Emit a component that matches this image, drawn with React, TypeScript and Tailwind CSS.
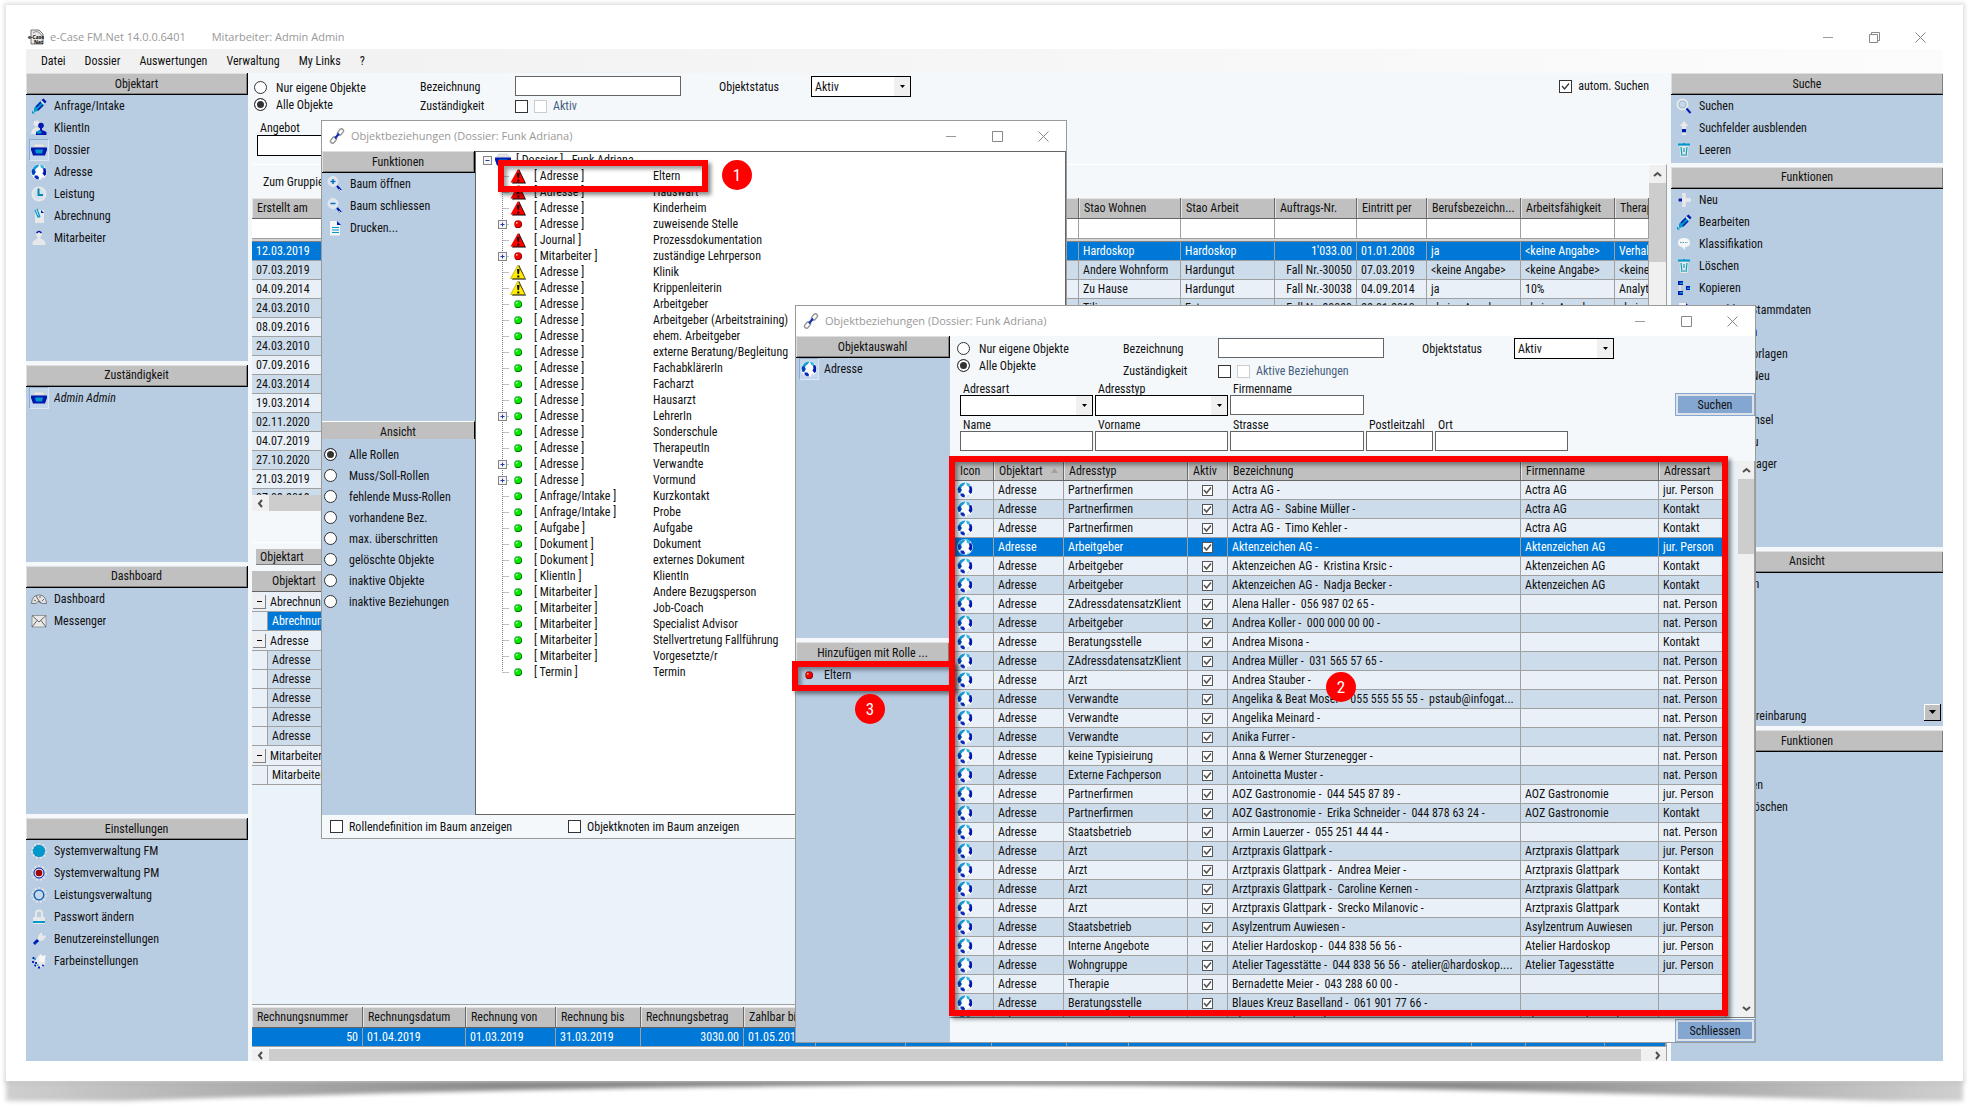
import React, { useState } from 'react';
import clsx from 'clsx';

/* ---------- icons ---------- */

const NAVY = '#0018b0';
const CYAN = '#0099cc';
const PALE = '#e6e8ea';

function Svg({ children, size = 16 }: { children: React.ReactNode; size?: number }) {
  return (
    <svg width={size} height={size} viewBox="0 0 16 16" fill="none" className="shrink-0" aria-hidden="true">
      {children}
    </svg>
  );
}

const icons: Record<string, React.ReactNode> = {
  pencil: (
    <>
      <path d="M3 10 L10 2.500 L14 6 L7 13 L3 14z" fill={CYAN} />
      <path d="M5 9 L10 4 M7 12 L12 7" stroke={NAVY} strokeWidth="1.500" />
      <path d="M10.500 2 L12.500 .5 L15.500 3.500 L14 5.500z" fill={NAVY} />
      <path d="M10 3 L13.500 6.500" stroke={PALE} strokeWidth="1.500" />
      <path d="M1 15.500 V12.500 L4 15.500z" fill={CYAN} />
    </>
  ),
  client: (
    <>
      <circle cx="5.500" cy="3.500" r="3" fill={PALE} />
      <path d="M0 14 Q0 9 5 7 L9 9 L7 14z" fill={PALE} />
      <circle cx="10" cy="5.500" r="2.800" fill={NAVY} />
      <path d="M9 7 H11 V10 L15.500 12 V15 H5 V12 L9 10z" fill={NAVY} />
      <path d="M5 12 L9 10 L11 13 L7 14z" fill={CYAN} />
    </>
  ),
  dossier: (
    <>
      <path d="M1.500 5 L4 2 H12 L14.500 5z" fill={PALE} stroke="#bbb" strokeWidth=".5" />
      <path d="M0 5.500 H16 V8 L14 13.500 H2 L0 8z" fill={NAVY} />
      <path d="M4 7.500 H12 L11 11.500 H5z" fill={CYAN} />
    </>
  ),
  globe: (
    <>
      <circle cx="8" cy="8" r="7.800" fill="#fbfbfb" />
      <path d="M3 2.500 Q5.500 .3 8.500 .6 L7 3 L5 4.500 L4 6.500 L5 8 L3.500 10.500 L1.500 11 Q0 8 1 5.500z" fill="#1b9bd8" />
      <path d="M.8 6 L3 5 L4.500 8 L3 11 L1.500 10.500 Q.4 8 .8 6z" fill="#0a3fb8" />
      <path d="M9 .6 Q12 1 13.500 3 L12 5 L10 3.500z" fill="#35b6e6" />
      <path d="M12 4.500 L14.300 4 Q16 7.500 15 10.500 L13.500 12 L11.500 9.500 L12.500 7.500z" fill={NAVY} />
      <path d="M3.500 11.500 L6.500 11.500 L8 13.500 L7.500 15.600 Q5 15.300 3.500 13.500z" fill="#0a2cc0" />
      <path d="M10 14 L13 12.500 L12 14.500 L10 15.500z" fill="#c4d4e6" />
    </>
  ),
  clock: (
    <>
      <circle cx="8" cy="8" r="7.500" fill={PALE} />
      <circle cx="8" cy="8" r="5.500" fill="#d4e2f0" />
      <path d="M7.500 2.500 V9 H12" stroke="#0a86a8" strokeWidth="2" />
    </>
  ),
  invoice: (
    <>
      <path d="M4 2 H13 V15 H4z" fill={PALE} />
      <path d="M6 1 L9 9 M4 2 L7 9 Q9 10 8 6" stroke={CYAN} strokeWidth="1.200" />
      <path d="M10 2 L13 5 H10z" fill={NAVY} />
    </>
  ),
  staff: (
    <>
      <circle cx="8" cy="4" r="3" fill={PALE} />
      <path d="M5.500 3 Q8 0 10.500 3" stroke={NAVY} strokeWidth="1.500" />
      <path d="M1.500 15 V12 Q4 9 6.500 8.500 V6 H9.500 V8.500 Q12 9 14.500 12 V15z" fill={PALE} />
    </>
  ),
  dashboard: (
    <>
      <path d="M.5 12.500 Q1 4 8 4 Q15 4 15.500 12.500 H11 Q8 8 5 12.500z" fill="#e4e4e4" stroke="#666" strokeWidth=".8" />
      <path d="M5 5 L9.500 12.500 M3 9 L5 10 M13 8 L11 10 M9 5 V7" stroke="#555" strokeWidth=".9" />
    </>
  ),
  mail: (
    <>
      <path d="M1 2.500 H15 V14 H1z" fill="#e8e8e8" stroke="#888" strokeWidth=".8" />
      <path d="M1 2.500 L8 9 L15 2.500 M1 14 L6 7.500 M15 14 L10 7.500" stroke="#555" strokeWidth=".9" />
    </>
  ),
  discCyan: (
    <>
      <circle cx="8" cy="8" r="7" fill="none" stroke={PALE} strokeWidth="1.500" strokeDasharray="2 2" />
      <circle cx="8" cy="8" r="6" fill={CYAN} />
      <circle cx="8" cy="8" r="5.800" stroke="#0a6fb8" strokeDasharray="1 2" />
    </>
  ),
  discRed: (
    <>
      <circle cx="8" cy="8" r="7" stroke={PALE} strokeWidth="1.500" strokeDasharray="2 2" />
      <circle cx="8" cy="8" r="5" fill="#e6e8ea" stroke={NAVY} />
      <circle cx="8" cy="8" r="3.300" fill="#a00000" />
    </>
  ),
  discRing: (
    <>
      <circle cx="8" cy="8" r="7" stroke={PALE} strokeWidth="1.500" strokeDasharray="2 2" />
      <circle cx="8" cy="8" r="4.800" fill="#c8d8ea" stroke="#0a5fb8" strokeWidth="1.300" />
    </>
  ),
  lock: (
    <>
      <path d="M5 8 V4 Q5 1.500 8 1.500 Q11 1.500 11 4 V8" stroke={PALE} strokeWidth="2" />
      <path d="M2 8 H14 V15 H2z" fill={PALE} />
      <path d="M2 12 H14 V14 H2z" fill={CYAN} />
    </>
  ),
  wrench: (
    <>
      <path d="M7 9 Q6 4 11 1 L11 4 L13 5 L15 4 Q15 8 10 10z" fill={PALE} />
      <path d="M3 13 L7 9" stroke={NAVY} strokeWidth="3" />
      <path d="M4.500 13 L6 11.500" stroke={CYAN} strokeWidth="1" />
    </>
  ),
  palette: (
    <>
      <path d="M8 2 Q14 2 14.500 8 Q14 14.500 8 14.500 Q4 14 4 8z" fill={PALE} />
      <path d="M2.500 4 V6 M2 8 V10 M3.500 12 L5 13 M7 14.500 H9 M11.500 13 L12.500 12 M5 9 V11" stroke={NAVY} strokeWidth="1.800" />
      <path d="M4 5 V7 M6 12 H7.500" stroke={CYAN} strokeWidth="1.500" />
      <path d="M8 8 L9 1 L12 3 L15 2 L13 9z" fill="#f4f6f8" />
    </>
  ),
  search: (
    <>
      <circle cx="6.500" cy="6.500" r="5" fill="#c6d8ea" stroke={PALE} strokeWidth="2" />
      <circle cx="6.500" cy="6.500" r="3.500" stroke="#8fb6c8" strokeWidth=".8" />
      <path d="M10.500 10.500 L14.500 15" stroke={NAVY} strokeWidth="2" />
    </>
  ),
  zoomIn: (
    <>
      <circle cx="6" cy="5.500" r="5" fill="#dde6ef" stroke={PALE} />
      <path d="M6 3 V8 M3.500 5.500 H8.500" stroke="#0a6fb8" strokeWidth="1.500" />
      <path d="M10 10 L14 14.500" stroke={NAVY} strokeWidth="2" />
      <path d="M12 13 L15 16" stroke={PALE} />
    </>
  ),
  zoomOut: (
    <>
      <circle cx="6" cy="5.500" r="5" fill="#dde6ef" stroke={PALE} />
      <path d="M3.500 5.500 H8.500" stroke="#0a6fb8" strokeWidth="1.500" />
      <path d="M10 10 L14 14.500" stroke={NAVY} strokeWidth="2" />
      <path d="M12 13 L15 16" stroke={PALE} />
    </>
  ),
  page: (
    <>
      <path d="M3 1 H10 L13 4 V15.500 H3z" fill="#f2f4f6" />
      <path d="M10 1 L14 5 H10z" fill={NAVY} />
      <path d="M5 7.500 H12 M5 10 H12 M5 12.500 H12" stroke={CYAN} />
    </>
  ),
  arrowUp: (
    <>
      <path d="M8 1 L12.500 6 H10 V9 H6 V6 H3.500z" fill={PALE} />
      <path d="M6 9 H10 V12.500 H6z" fill={NAVY} />
      <path d="M6 12.500 H10 V15 H6z" fill={PALE} />
    </>
  ),
  trash: (
    <>
      <path d="M3.500 4 H12.500 L11.500 15 H4.500z" fill={PALE} />
      <path d="M2 2.500 H14 M8 1 V2.500" stroke={CYAN} strokeWidth="1.800" />
      <path d="M5 5 L6 14 M8 6 V10 M8 12 V14 M11 5 L10 14" stroke="#0aa0b8" strokeWidth="1.200" />
    </>
  ),
  plus: (
    <>
      <path d="M8 1 V15 M2 8 H15" stroke={PALE} strokeWidth="3.500" />
      <path d="M2.500 6.500 H6 V9.500 H2.500z" fill={NAVY} />
    </>
  ),
  bubble: (
    <>
      <path d="M2 7 Q2 2 8 2 Q14 2 14 7 Q14 11 9 11 L9 14 L6 11 Q2 10 2 7z" fill="#f4f6f8" />
      <path d="M4 6.500 H12" stroke="#5f9cc0" strokeWidth="1.200" strokeDasharray="1.500 1" />
    </>
  ),
  copy: (
    <>
      <path d="M2 1 H7 V5 H2z M10 6 H14 V10 H10z M2 11 H7 V15 H2z" fill={NAVY} />
      <path d="M3.500 2.500 H7 V4 H3.500z M11 7.500 H14 V9 H11z M3.500 12 H7 V13.500 H3.500z" fill={CYAN} />
      <path d="M4 5 V11" stroke={PALE} strokeWidth="1.500" />
    </>
  ),
  chain: (
    <>
      <rect x="-3.500" y="-2" width="7" height="4" rx="2" transform="translate(11.500 4) rotate(-50)" stroke="#9a9a9a" strokeWidth="1.500" />
      <rect x="-3.500" y="-2" width="7" height="4" rx="2" transform="translate(4.500 12) rotate(-50)" stroke="#9a9a9a" strokeWidth="1.500" />
      <path d="M6 10.500 L10 5.500" stroke="#1a2fb8" strokeWidth="2.200" />
    </>
  ),
  warnRed: (
    <>
      <path d="M9 1 L16 15.500 H2z" fill="#000" />
      <path d="M8 1 L15 14.500 H.5z" fill="#f00" />
      <path d="M7 5 H9.500 L9 10 H7.500z M7.300 11.500 H9.300 V13.500 H7.300z" fill="#000" />
    </>
  ),
  warnYellow: (
    <>
      <path d="M9 1 L16 15.500 H2z" fill="#000" />
      <path d="M8 1 L15 14.500 H.5z" fill="#ffec00" stroke="#8a8000" strokeWidth=".5" />
      <path d="M7 5 H9.500 L9 10 H7.500z M7.300 11.500 H9.300 V13.500 H7.300z" fill="#000" />
    </>
  ),
  ballRed: (
    <>
      <path d="M6 4.500 H10 L12 6.500 V10 L10 12 H6 L4.500 10 V6.500z" fill="#8a0000" />
      <circle cx="8" cy="8" r="3.300" fill="#f00000" />
      <circle cx="6.800" cy="6.800" r=".9" fill="#ffd0a0" />
    </>
  ),
  ballGreen: (
    <>
      <path d="M6 4.500 H10 L12 6.500 V10 L10 12 H6 L4.500 10 V6.500z" fill="#006a00" />
      <circle cx="8" cy="8" r="3.300" fill="#00e800" />
      <circle cx="6.800" cy="6.800" r=".9" fill="#d8ffd8" />
    </>
  ),
};

function Icon({ name, size }: { name: string; size?: number }) {
  return <Svg size={size}>{icons[name]}</Svg>;
}

/* ---------- small controls ---------- */

function Checkbox({ checked, dim, grid, label, ...rest }: { checked?: boolean; dim?: boolean; grid?: boolean; label?: string; id?: string }) {
  const [on, setOn] = useState(!!checked);
  return (
    <span className="inline-grid shrink-0 place-items-center">
      <input
        type="checkbox"
        checked={on}
        disabled={dim}
        aria-label={label}
        onChange={() => setOn(!on)}
        className={clsx(
          'col-start-1 row-start-1 appearance-none border bg-white',
          grid ? 'h-[11px] w-[11px]' : 'h-[13px] w-[13px]',
          dim ? 'border-[#cccccc]' : grid ? 'border-[#555555]' : 'border-[#333333]'
        )}
        {...rest}
      />
      {on && (
        <svg width="11" height="11" viewBox="0 0 11 11" className="pointer-events-none col-start-1 row-start-1">
          <path d="M2 5 L4.500 8 L9 2.500" fill="none" stroke={grid ? '#555' : '#333'} strokeWidth={grid ? 1.6 : 1.2} />
        </svg>
      )}
    </span>
  );
}

function Radio({ name, label, checked }: { name: string; label: string; checked?: boolean }) {
  return (
    <label className="flex items-center gap-[9px]">
      <input
        type="radio"
        name={name}
        defaultChecked={checked}
        className="h-[13px] w-[13px] shrink-0 appearance-none rounded-full border border-[#333333] bg-white checked:bg-[#333333] checked:shadow-[inset_0_0_0_2px_#ffffff]"
      />
      {label}
    </label>
  );
}

function Select({ id, value = '', className }: { id: string; value?: string; className?: string }) {
  return (
    <span className={clsx('grid h-[21px] border border-black bg-white', className)}>
      <select id={id} defaultValue={value} className="col-start-1 row-start-1 w-full appearance-none bg-transparent pl-[3px] outline-none">
        <option value={value}>{value}</option>
      </select>
      <span className="pointer-events-none col-start-1 row-start-1 flex w-4 items-center justify-center justify-self-end bg-[#f0f0f0]">
        <svg width="5" height="3" viewBox="0 0 5 3">
          <path d="M0 0 H5 L2.500 3z" />
        </svg>
      </span>
    </span>
  );
}

function TextField({ id, className }: { id: string; className?: string }) {
  return <input id={id} type="text" className={clsx('h-5 border border-[#646464] bg-white px-1 outline-none', className)} />;
}

function WindowButtons({ restore }: { restore?: boolean }) {
  return (
    <div className="flex">
      <button aria-label="Minimieren" className="flex h-6 w-[46px] items-center justify-center">
        <svg width="11" height="11" viewBox="0 0 11 11" stroke="#999" fill="none"><path d="M0 5.500 H10" /></svg>
      </button>
      <button aria-label="Maximieren" className="flex h-6 w-[46px] items-center justify-center">
        <svg width="11" height="11" viewBox="0 0 11 11" stroke="#888" fill="none">
          {restore ? <path d="M.5 2.500 H8.500 V10.500 H.5z M2.500 2.500 V.5 H10.500 V8.500 H8.500" /> : <path d="M.5 .5 H10.500 V10.500 H.5z" />}
        </svg>
      </button>
      <button aria-label="Schliessen" className="flex h-6 w-[46px] items-center justify-center">
        <svg width="11" height="11" viewBox="0 0 11 11" stroke="#888" fill="none"><path d="M.5 .5 L10.500 10.500 M10.500 .5 L.5 10.500" /></svg>
      </button>
    </div>
  );
}

function PanelHeader({ title, open }: { title: string; open?: boolean }) {
  return (
    <h2
      className={clsx(
        'flex h-[22px] shrink-0 items-center justify-center border-b border-black bg-[#c0c0c0] shadow-[inset_1px_1px_#dfdfdf,inset_-1px_-1px_#808080]',
        !open && 'border-r'
      )}
    >
      {title}
    </h2>
  );
}

interface Item {
  icon: string;
  label: string;
  active?: boolean;
  italic?: boolean;
}

function PanelItem({ icon, label, active, italic }: Item) {
  return (
    <button className="flex h-[22px] w-full items-center gap-[5px] pl-[3px] text-left">
      <span
        className={clsx(
          'flex h-[22px] w-5 shrink-0 items-center justify-center border',
          active ? 'border-t-[#8fabcf] border-r-[#dbe7f5] border-b-[#dbe7f5] border-l-[#8fabcf] bg-[#c4d6ea]' : 'border-transparent'
        )}
      >
        <Icon name={icon} />
      </span>
      <span className={clsx('truncate', italic && 'italic')}>{label}</span>
    </button>
  );
}

function Panel({ title, items, open, className, children }: { title: string; items?: Item[]; open?: boolean; className: string; children?: React.ReactNode }) {
  return (
    <section className={clsx('flex min-h-0 basis-0 flex-col overflow-hidden bg-[#b8cce2]', className)}>
      <PanelHeader title={title} open={open} />
      <div>
        {items?.map((item) => (
          <PanelItem key={item.label} {...item} />
        ))}
      </div>
      {children}
    </section>
  );
}

/* Filter fields shared by the main window and the selection dialog */
function SearchHead({ id, activeLabel, rows, radios, children }: { id: string; activeLabel: string; rows: string; radios: string; children?: React.ReactNode }) {
  return (
    <div className="flex items-start">
      <div className={clsx('flex w-[166px] shrink-0 flex-col *:h-[17px]', radios)}>
        <Radio name={`${id}-scope`} label="Nur eigene Objekte" />
        <Radio name={`${id}-scope`} label="Alle Objekte" checked />
      </div>
      <div className={clsx('grid shrink-0 grid-cols-[95px_204px_92px_100px]', rows)}>
        <label htmlFor={`${id}-bez`} className="self-center">Bezeichnung</label>
        <TextField id={`${id}-bez`} className="w-[166px]" />
        <label htmlFor={`${id}-status`} className="self-center">Objektstatus</label>
        <Select id={`${id}-status`} value="Aktiv" />
        <label htmlFor={`${id}-zust`} className="self-center">Zuständigkeit</label>
        <span className="flex items-center gap-[6px] text-[#44607f]">
          <Checkbox id={`${id}-zust`} />
          <Checkbox id={`${id}-aktiv`} dim />
          <label htmlFor={`${id}-aktiv`}>{activeLabel}</label>
        </span>
      </div>
      {children}
    </div>
  );
}

const th = 'h-5 overflow-hidden whitespace-nowrap border-r border-b border-r-[#696969] border-b-[#646464] bg-[#c0c0c0] px-[5px] text-left font-normal shadow-[inset_1px_1px_#e4e4e4]';
const td = 'h-[19px] overflow-hidden whitespace-pre border-r border-b border-[#a0a0a0] px-1 py-0 leading-[18px]';

function rowColor(i: number, selected: number) {
  if (i === selected) return 'bg-[#0078d7] text-white';
  return i % 2 ? 'bg-[#cddceb]' : 'bg-[#e9f0f8]';
}

/* ---------- data ---------- */

const objectTypes: Item[] = [
  { icon: 'pencil', label: 'Anfrage/Intake' },
  { icon: 'client', label: 'KlientIn' },
  { icon: 'dossier', label: 'Dossier', active: true },
  { icon: 'globe', label: 'Adresse' },
  { icon: 'clock', label: 'Leistung' },
  { icon: 'invoice', label: 'Abrechnung' },
  { icon: 'staff', label: 'Mitarbeiter' },
];

const settings: Item[] = [
  { icon: 'discCyan', label: 'Systemverwaltung FM' },
  { icon: 'discRed', label: 'Systemverwaltung PM' },
  { icon: 'discRing', label: 'Leistungsverwaltung' },
  { icon: 'lock', label: 'Passwort ändern' },
  { icon: 'wrench', label: 'Benutzereinstellungen' },
  { icon: 'palette', label: 'Farbeinstellungen' },
];

const searchActions: Item[] = [
  { icon: 'search', label: 'Suchen' },
  { icon: 'arrowUp', label: 'Suchfelder ausblenden' },
  { icon: 'trash', label: 'Leeren' },
];

const functions: Item[] = [
  { icon: 'plus', label: 'Neu' },
  { icon: 'pencil', label: 'Bearbeiten' },
  { icon: 'bubble', label: 'Klassifikation' },
  { icon: 'trash', label: 'Löschen' },
  { icon: 'copy', label: 'Kopieren' },
  { icon: 'page', label: 'Datenblatt Stammdaten' },
  { icon: 'page', label: 'Serie planen' },
  { icon: 'page', label: 'Dokumentvorlagen' },
  { icon: 'plus', label: 'Beziehung Neu' },
  { icon: 'chain', label: 'Rollen' },
  { icon: 'copy', label: 'Dossierwechsel' },
  { icon: 'plus', label: 'Aufgabe neu' },
  { icon: 'page', label: 'Kontaktmanager' },
];

const views: Item[] = [
  { icon: 'page', label: 'Rollen sehen' },
  { icon: 'page', label: 'Verlauf' },
  { icon: 'page', label: 'Journal' },
  { icon: 'page', label: 'Termine' },
  { icon: 'page', label: 'Notizen' },
  { icon: 'page', label: 'Aufgaben' },
  { icon: 'page', label: 'Leistungsvereinbarung' },
];

const viewActions: Item[] = [
  { icon: 'plus', label: 'Neu' },
  { icon: 'page', label: 'Objekt öffnen' },
  { icon: 'trash', label: 'Beziehung löschen' },
];

const dossierRows = [
  ['12.03.2019', '', 'Hardoskop', 'Hardoskop', "1'033.00", '01.01.2008', 'ja', '<keine Angabe>', 'Verhaltenstherapie'],
  ['07.03.2019', '', 'Andere Wohnform', 'Hardungut', 'Fall Nr.-30050', '07.03.2019', '<keine Angabe>', '<keine Angabe>', '<keine Angabe>'],
  ['04.09.2014', '', 'Zu Hause', 'Hardungut', 'Fall Nr.-30038', '04.09.2014', 'ja', '10%', 'Analytisch'],
  ['24.03.2010', '', 'Tilia', 'Extern', 'Fall Nr.-30083', '22.01.2010', '<keine Angabe>', '<keine Angabe>', '<keine Angabe>'],
  ...['08.09.2016', '24.03.2010', '07.09.2016', '24.03.2014', '19.03.2014', '02.11.2020', '04.07.2019', '27.10.2020', '21.03.2019', '07.03.2019'].map((d) => [
    d, '', '', '', '', '', '', '', '',
  ]),
];

const relationGroups = [
  { name: 'Abrechnung', count: 1, selected: true },
  { name: 'Adresse', count: 5 },
  { name: 'Mitarbeiter', count: 1 },
];

const treeRows: [string, string, string, boolean?][] = [
  ['warnRed', 'Adresse', 'Eltern'],
  ['warnRed', 'Adresse', 'Hauswart'],
  ['warnRed', 'Adresse', 'Kinderheim'],
  ['ballRed', 'Adresse', 'zuweisende Stelle', true],
  ['warnRed', 'Journal', 'Prozessdokumentation'],
  ['ballRed', 'Mitarbeiter', 'zuständige Lehrperson', true],
  ['warnYellow', 'Adresse', 'Klinik'],
  ['warnYellow', 'Adresse', 'Krippenleiterin'],
  ['ballGreen', 'Adresse', 'Arbeitgeber'],
  ['ballGreen', 'Adresse', 'Arbeitgeber (Arbeitstraining)'],
  ['ballGreen', 'Adresse', 'ehem. Arbeitgeber'],
  ['ballGreen', 'Adresse', 'externe Beratung/Begleitung'],
  ['ballGreen', 'Adresse', 'FachabklärerIn'],
  ['ballGreen', 'Adresse', 'Facharzt'],
  ['ballGreen', 'Adresse', 'Hausarzt'],
  ['ballGreen', 'Adresse', 'LehrerIn', true],
  ['ballGreen', 'Adresse', 'Sonderschule'],
  ['ballGreen', 'Adresse', 'TherapeutIn'],
  ['ballGreen', 'Adresse', 'Verwandte', true],
  ['ballGreen', 'Adresse', 'Vormund', true],
  ['ballGreen', 'Anfrage/Intake', 'Kurzkontakt'],
  ['ballGreen', 'Anfrage/Intake', 'Probe'],
  ['ballGreen', 'Aufgabe', 'Aufgabe'],
  ['ballGreen', 'Dokument', 'Dokument'],
  ['ballGreen', 'Dokument', 'externes Dokument'],
  ['ballGreen', 'KlientIn', 'KlientIn'],
  ['ballGreen', 'Mitarbeiter', 'Andere Bezugsperson'],
  ['ballGreen', 'Mitarbeiter', 'Job-Coach'],
  ['ballGreen', 'Mitarbeiter', 'Specialist Advisor'],
  ['ballGreen', 'Mitarbeiter', 'Stellvertretung Fallführung'],
  ['ballGreen', 'Mitarbeiter', 'Vorgesetzte/r'],
  ['ballGreen', 'Termin', 'Termin'],
];

const roleFilters = ['Alle Rollen', 'Muss/Soll-Rollen', 'fehlende Muss-Rollen', 'vorhandene Bez.', 'max. überschritten', 'gelöschte Objekte', 'inaktive Objekte', 'inaktive Beziehungen'];

const addresses: [string, string, string, string][] = [
  ['Partnerfirmen', 'Actra AG -', 'Actra AG', 'jur. Person'],
  ['Partnerfirmen', 'Actra AG -  Sabine Müller -', 'Actra AG', 'Kontakt'],
  ['Partnerfirmen', 'Actra AG -  Timo Kehler -', 'Actra AG', 'Kontakt'],
  ['Arbeitgeber', 'Aktenzeichen AG -', 'Aktenzeichen AG', 'jur. Person'],
  ['Arbeitgeber', 'Aktenzeichen AG -  Kristina Krsic -', 'Aktenzeichen AG', 'Kontakt'],
  ['Arbeitgeber', 'Aktenzeichen AG -  Nadja Becker -', 'Aktenzeichen AG', 'Kontakt'],
  ['ZAdressdatensatzKlient', 'Alena Haller -  056 987 02 65 -', '', 'nat. Person'],
  ['Arbeitgeber', 'Andrea Koller -  000 000 00 00 -', '', 'nat. Person'],
  ['Beratungsstelle', 'Andrea Misona -', '', 'Kontakt'],
  ['ZAdressdatensatzKlient', 'Andrea Müller -  031 565 57 65 -', '', 'nat. Person'],
  ['Arzt', 'Andrea Stauber -', '', 'nat. Person'],
  ['Verwandte', 'Angelika & Beat Moser -  055 555 55 55 -  pstaub@infogat...', '', 'nat. Person'],
  ['Verwandte', 'Angelika Meinard -', '', 'nat. Person'],
  ['Verwandte', 'Anika Furrer -', '', 'nat. Person'],
  ['keine Typisieirung', 'Anna & Werner Sturzenegger -', '', 'nat. Person'],
  ['Externe Fachperson', 'Antoinetta Muster -', '', 'nat. Person'],
  ['Partnerfirmen', 'AOZ Gastronomie -  044 545 87 89 -', 'AOZ Gastronomie', 'jur. Person'],
  ['Partnerfirmen', 'AOZ Gastronomie -  Erika Schneider -  044 878 63 24 -', 'AOZ Gastronomie', 'Kontakt'],
  ['Staatsbetrieb', 'Armin Lauerzer -  055 251 44 44 -', '', 'nat. Person'],
  ['Arzt', 'Arztpraxis Glattpark -', 'Arztpraxis Glattpark', 'jur. Person'],
  ['Arzt', 'Arztpraxis Glattpark -  Andrea Meier -', 'Arztpraxis Glattpark', 'Kontakt'],
  ['Arzt', 'Arztpraxis Glattpark -  Caroline Kernen -', 'Arztpraxis Glattpark', 'Kontakt'],
  ['Arzt', 'Arztpraxis Glattpark -  Srecko Milanovic -', 'Arztpraxis Glattpark', 'Kontakt'],
  ['Staatsbetrieb', 'Asylzentrum Auwiesen -', 'Asylzentrum Auwiesen', 'jur. Person'],
  ['Interne Angebote', 'Atelier Hardoskop -  044 838 56 56 -', 'Atelier Hardoskop', 'jur. Person'],
  ['Wohngruppe', 'Atelier Tagesstätte -  044 838 56 56 -  atelier@hardoskop....', 'Atelier Tagesstätte', 'jur. Person'],
  ['Therapie', 'Bernadette Meier -  043 288 60 00 -', '', ''],
  ['Beratungsstelle', 'Blaues Kreuz Baselland -  061 901 77 66 -', '', ''],
  ['Interne Angebote', 'Blumengut Glattpark -  061 222 78 90 -', 'Blumengut Glattpark', 'jur. Person'],
];

/* ---------- main window ---------- */

function Chevron({ d }: { d: string }) {
  return (
    <svg width="9" height="9" viewBox="0 0 9 9" fill="none" stroke="#505050" strokeWidth="2" aria-hidden="true">
      <path d={d} />
    </svg>
  );
}

function DossierTable() {
  return (
    <div className="flex h-[347px] shrink-0 border-t border-r border-white border-r-[#a0a0a0]">
      <div className="flex min-w-0 flex-1 flex-col overflow-hidden">
        <p className="flex h-[33px] shrink-0 items-center pl-[11px]">Zum Gruppieren nach einer Spalte</p>
        <div className="min-h-0 flex-1 overflow-hidden">
          <table className="w-full table-fixed border-separate border-spacing-0">
            <colgroup>
              <col className="w-[75px]" />
              <col />
              <col className="w-[102px]" />
              <col className="w-[94px]" />
              <col className="w-[82px]" />
              <col className="w-[70px]" />
              <col className="w-[94px]" />
              <col className="w-[94px]" />
              <col className="w-[34px]" />
            </colgroup>
            <thead>
              <tr>
                {['Erstellt am', '', 'Stao Wohnen', 'Stao Arbeit', 'Auftrags-Nr.', 'Eintritt per', 'Berufsbezeichn...', 'Arbeitsfähigkeit', 'Therapie'].map((h, i) => (
                  <th key={i} className={clsx(th, 'h-[21px]')}>{h}</th>
                ))}
              </tr>
              <tr>
                {Array.from({ length: 9 }, (_, i) => (
                  <td key={i} className="h-5 border-r border-b border-[#a0a0a0] bg-white" />
                ))}
              </tr>
              <tr>
                <td colSpan={9} className="h-[3px] border-b border-[#808080] bg-[#d4d4d4] p-0" />
              </tr>
            </thead>
            <tbody>
              {dossierRows.map((row, i) => (
                <tr key={i} className={rowColor(i, 0)}>
                  {row.map((cell, c) => (
                    <td key={c} className={clsx(td, c === 4 && 'text-right')}>{cell}</td>
                  ))}
                </tr>
              ))}
            </tbody>
          </table>
        </div>
        <div className="flex h-4 shrink-0 bg-[#f0f0f0]">
          <button aria-label="Nach links" className="flex w-[17px] items-center justify-center"><Chevron d="M6 1 L3 4.500 L6 8" /></button>
          <div className="w-1/2 bg-[#cdcdcd]" />
        </div>
      </div>
      <div className="flex w-[17px] shrink-0 flex-col bg-[#f0f0f0]">
        <button aria-label="Nach oben" className="flex h-[18px] items-center justify-center"><Chevron d="M1 6 L4.500 3 L8 6" /></button>
        <div className="h-[79px] bg-[#cdcdcd]" />
      </div>
    </div>
  );
}

function RelationTable() {
  return (
    <div className="mt-[31px] flex min-h-0 flex-1 flex-col border-t border-white bg-[#eaf2fa]">
      <div className="flex h-7 items-center bg-[#f4f8fb] pl-1">
        <span className="flex h-4 w-[90px] items-center border-b border-[#808080] bg-[#c0c0c0] pl-1">Objektart</span>
      </div>
      <div className="flex h-[21px] shrink-0 items-center border-b border-[#646464] bg-[#c0c0c0] pl-5">Objektart</div>
      {relationGroups.map((g) => (
        <div key={g.name}>
          <div className="flex h-5 items-center border-b border-[#a0a0a0] bg-[#e9f0f8] pl-px">
            <button aria-label={`${g.name} zuklappen`} className="mr-1 flex h-[14px] w-[13px] items-center justify-center border-r border-b border-[#808080] bg-[#f0f0f0]">
              <svg width="5" height="1"><rect width="5" height="1" /></svg>
            </button>
            {g.name}
          </div>
          {Array.from({ length: g.count }, (_, i) => (
            <div key={i} className="flex h-[19px] border-b border-[#a0a0a0] bg-[#e9f0f8] pl-[15px]">
              <span
                className={clsx(
                  'flex flex-1 items-center border-l border-[#a0a0a0] pl-1',
                  g.selected ? 'bg-[#0078d7] text-white' : g.count > 1 ? 'bg-[#cddceb]' : 'bg-[#e9f0f8]'
                )}
              >
                {g.name}
              </span>
            </div>
          ))}
        </div>
      ))}
    </div>
  );
}

function InvoiceTable() {
  const cells = ['50', '01.04.2019', '01.03.2019', '31.03.2019', '3030.00', '01.05.2019', '', '', '', '', '', '', '', ''];
  const heads = ['Rechnungsnummer', 'Rechnungsdatum', 'Rechnung von', 'Rechnung bis', 'Rechnungsbetrag', 'Zahlbar bis', '', '', '', '', '', '', '', ''];
  return (
    <div className="shrink-0 border-t border-r border-[#a0a0a0] pt-[2px]">
      <table className="w-full table-fixed border-separate border-spacing-0">
        <colgroup>
          <col className="w-[111px]" />
          <col className="w-[103px]" />
          <col className="w-[90px]" />
          <col className="w-[85px]" />
          <col className="w-[103px]" />
          <col className="w-[72px]" />
          <col className="w-[90px]" />
          <col className="w-[86px]" />
          <col className="w-[75px]" />
          <col className="w-[62px]" />
          <col />
          <col className="w-[54px]" />
          <col className="w-[79px]" />
          <col className="w-[61px]" />
        </colgroup>
        <thead>
          <tr>{heads.map((h, i) => <th key={i} className={clsx(th, 'h-[21px]')}>{h}</th>)}</tr>
        </thead>
        <tbody>
          <tr className="bg-[#0078d7] text-white">
            {cells.map((c, i) => <td key={i} className={clsx(td, (i === 0 || i === 4) && 'text-right')}>{c}</td>)}
          </tr>
        </tbody>
      </table>
      <div className="mt-[2px] flex h-3 bg-[#f0f0f0]">
        <button aria-label="Nach links" className="flex w-[17px] items-center justify-center"><Chevron d="M6 1 L3 4.500 L6 8" /></button>
        <div className="flex-1 bg-[#cdcdcd]" />
        <button aria-label="Nach rechts" className="flex w-[25px] items-center justify-center pl-2"><Chevron d="M3 1 L6 4.500 L3 8" /></button>
      </div>
    </div>
  );
}

function MainWindow() {
  return (
    <div className="flex min-h-0 flex-1 flex-col">
      <header className="flex h-6 shrink-0 items-center justify-between">
        <div className="flex items-center gap-[6px] pl-[2px] font-['Open_Sans',sans-serif] text-[11px] text-[#999999]">
          <svg width="16" height="16" viewBox="0 0 16 16" aria-hidden="true">
            <path d="M3 1 H11 L15 5 V15 H3z" fill="#e8e8e8" stroke="#555" strokeWidth=".8" />
            <path d="M5 4 Q10 0 14 7" stroke="#888" fill="none" />
            <text x="0" y="10" fontSize="5" fontWeight="700" fill="#000">e-Case</text>
            <text x="6" y="15" fontSize="5" fontWeight="700" fill="#000">Net</text>
          </svg>
          <span>e-Case FM.Net 14.0.0.6401</span>
          <span className="pl-5">Mitarbeiter: Admin Admin</span>
        </div>
        <WindowButtons restore />
      </header>
      <nav className="flex h-6 shrink-0 items-center gap-[19px] bg-linear-to-r from-[#f0f0f0] to-[#fcfcfc] pl-[15px]">
        {['Datei', 'Dossier', 'Auswertungen', 'Verwaltung', 'My Links', '?'].map((m) => (
          <button key={m}>{m}</button>
        ))}
      </nav>
      <div className="flex min-h-0 flex-1 gap-1 bg-[#f4f8fb]">
        <aside className="flex w-[222px] shrink-0 flex-col gap-1">
          <Panel title="Objektart" items={objectTypes} className="grow-[288]" />
          <Panel title="Zuständigkeit" items={[{ icon: 'dossier', label: 'Admin Admin', active: true, italic: true }]} className="grow-[197]" />
          <Panel title="Dashboard" items={[{ icon: 'dashboard', label: 'Dashboard' }, { icon: 'mail', label: 'Messenger' }]} className="grow-[249]" />
          <Panel title="Einstellungen" items={settings} className="grow-[243]" />
        </aside>
        <main className="flex min-w-0 flex-1 flex-col">
          <div className="h-[91px] shrink-0 pt-[3px] pr-[18px] pl-[2px]">
            <SearchHead id="main" activeLabel="Aktiv" rows="gap-y-px" radios="pt-[3px]">
              <label className="ml-auto flex h-5 items-center gap-[6px]">
                <Checkbox checked />
                autom. Suchen
              </label>
            </SearchHead>
            <div className="mt-[7px] flex w-[136px] flex-col pl-[3px]">
              <label htmlFor="angebot" className="h-[14px] pl-[3px] leading-[14px]">Angebot</label>
              <Select id="angebot" />
            </div>
          </div>
          <DossierTable />
          <RelationTable />
          <InvoiceTable />
        </main>
        <aside className="flex w-[272px] shrink-0 flex-col gap-1">
          <Panel title="Suche" items={searchActions} open className="grow-[90]" />
          <Panel title="Funktionen" items={functions} open className="grow-[380]" />
          <Panel title="Ansicht" items={views} open className="relative grow-[176]">
            <button aria-label="Mehr" className="absolute right-[2px] bottom-[5px] flex h-[17px] w-[17px] items-center justify-center border-r border-b border-black bg-[#c0c0c0] shadow-[inset_1px_1px_#ffffff]">
              <svg width="7" height="4" viewBox="0 0 7 4"><path d="M0 0 H7 L3.500 4z" /></svg>
            </button>
          </Panel>
          <Panel title="Funktionen" items={viewActions} open className="grow-[331]" />
        </aside>
      </div>
    </div>
  );
}

/* ---------- dialogs ---------- */

function DialogTitle() {
  return (
    <header className="flex h-[30px] shrink-0 items-center justify-between bg-white pl-[7px] font-['Open_Sans',sans-serif] text-[11px] text-[#999999]">
      <span className="flex items-center gap-[6px]">
        <Icon name="chain" />
        Objektbeziehungen (Dossier: Funk Adriana)
      </span>
      <WindowButtons />
    </header>
  );
}

function Connector({ expandable, last }: { expandable?: boolean; last?: boolean }) {
  return (
    <svg width="12" height="16" viewBox="0 0 12 16" fill="none" className="shrink-0" aria-hidden="true">
      <path d={last ? 'M4.500 0 V8' : 'M4.500 0 V16'} stroke="#808080" strokeDasharray="1 1" />
      <path d="M4.500 8.500 H11" stroke="#808080" strokeDasharray="1 1" />
      {expandable && (
        <>
          <rect x=".5" y="4.500" width="8" height="8" fill="#f6f6f6" stroke="#848484" />
          <path d="M2.500 8.500 H6.500 M4.500 6.500 V10.500" stroke="#2040a0" />
        </>
      )}
    </svg>
  );
}

function RelationDialog() {
  return (
    <section className="absolute top-[120px] left-[321px] flex h-[719px] w-[746px] flex-col border border-[#9a9a9a] bg-[#f4f8fb]">
      <DialogTitle />
      <div className="flex min-h-0 flex-1">
        <aside className="flex w-[153px] shrink-0 flex-col bg-[#b8cce2]">
          <div className="h-[270px]">
            <PanelHeader title="Funktionen" />
            <PanelItem icon="zoomIn" label="Baum öffnen" />
            <PanelItem icon="zoomOut" label="Baum schliessen" />
            <PanelItem icon="page" label="Drucken..." />
          </div>
          <h2 className="flex h-[18px] items-center justify-center border-t border-r border-t-white border-r-black bg-[#c0c0c0] pt-[3px]">Ansicht</h2>
          <div className="pt-[5px] pl-[2px] *:h-[21px]">
            {roleFilters.map((r, i) => (
              <label key={r} className="flex items-center gap-3">
                <input
                  type="radio"
                  name="rollen"
                  defaultChecked={i === 0}
                  className="h-[13px] w-[13px] shrink-0 appearance-none rounded-full border border-[#333333] bg-white checked:bg-[#333333] checked:shadow-[inset_0_0_0_2px_#ffffff]"
                />
                {r}
              </label>
            ))}
          </div>
        </aside>
        <div className="min-w-0 flex-1 overflow-hidden border border-[#646464] bg-white">
          <div className="flex h-4 items-center pl-[7px]">
            <svg width="12" height="16" viewBox="0 0 12 16" fill="none" aria-hidden="true">
              <rect x=".5" y="4.500" width="8" height="8" fill="#f6f6f6" stroke="#848484" />
              <path d="M2.500 8.500 H6.500" stroke="#2040a0" />
            </svg>
            <Icon name="dossier" />
            <span className="pl-[5px] whitespace-pre">[ Dossier ]   Funk Adriana</span>
          </div>
          <ul className="pl-[22px]">
            {treeRows.map(([icon, type, role, expandable], i) => (
              <li key={i} className="flex h-4 items-center">
                <Connector expandable={expandable} last={i === treeRows.length - 1} />
                <Icon name={icon} />
                <span className="w-[127px] pl-2">[ {type} ]</span>
                <span>{role}</span>
              </li>
            ))}
          </ul>
        </div>
      </div>
      <footer className="flex h-[23px] shrink-0 items-center pl-2 whitespace-nowrap *:w-[238px]">
        <label className="flex shrink-0 items-center gap-[6px]"><Checkbox />Rollendefinition im Baum anzeigen</label>
        <label className="flex shrink-0 items-center gap-[6px]"><Checkbox />Objektknoten im Baum anzeigen</label>
        <label className="pl-px"><Checkbox label="Inaktive anzeigen" /></label>
      </footer>
    </section>
  );
}

function Field({ id, label, select, className }: { id: string; label: string; select?: boolean; className: string }) {
  return (
    <div className={clsx('flex flex-col', className)}>
      <label htmlFor={id} className="h-3 pl-[3px] leading-3">{label}</label>
      {select ? <Select id={id} /> : <TextField id={id} className="w-full" />}
    </div>
  );
}

function BlueButton({ children }: { children: React.ReactNode }) {
  return (
    <button className="h-[23px] w-20 border border-[#84a7d1] bg-[#84a7d1] shadow-[inset_0_0_0_2px_#dfe3e8]">{children}</button>
  );
}

function SelectionDialog() {
  return (
    <section className="absolute top-[305px] left-[795px] flex h-[738px] w-[961px] flex-col border border-[#9a9a9a] bg-[#f4f8fb]">
      <DialogTitle />
      <div className="flex min-h-0 flex-1">
        <aside className="flex w-[154px] shrink-0 flex-col gap-1">
          <Panel title="Objektauswahl" items={[{ icon: 'globe', label: 'Adresse', active: true }]} className="grow-[302]" />
          <Panel title="Hinzufügen mit Rolle ..." items={[{ icon: 'ballRed', label: 'Eltern' }]} className="grow-[400]" />
        </aside>
        <div className="flex min-w-0 flex-1 flex-col">
          <div className="shrink-0 pt-[2px] pl-[7px]">
            <SearchHead id="dlg" activeLabel="Aktive Beziehungen" rows="gap-y-1" radios="pt-[2px]" />
          </div>
          <div className="mt-1 flex shrink-0 items-end justify-between pl-[10px]">
            <div className="flex gap-[2px]">
              <Field id="adressart" label="Adressart" select className="w-[133px]" />
              <Field id="adresstyp" label="Adresstyp" select className="w-[133px]" />
              <Field id="firmenname" label="Firmenname" className="w-[134px]" />
            </div>
            <BlueButton>Suchen</BlueButton>
          </div>
          <div className="mt-[3px] flex shrink-0 gap-[2px] pl-[10px]">
            <Field id="name" label="Name" className="w-[133px]" />
            <Field id="vorname" label="Vorname" className="w-[133px]" />
            <Field id="strasse" label="Strasse" className="w-[134px]" />
            <Field id="plz" label="Postleitzahl" className="w-[67px]" />
            <Field id="ort" label="Ort" className="w-[133px]" />
          </div>
          <div className="mt-[10px] flex min-h-0 flex-1 border-b border-[#808080]">
            <div className="min-w-0 flex-1 overflow-hidden bg-[#e9f0f8] pr-[12px]">
              <table className="w-full table-fixed border-separate border-spacing-0">
                <colgroup>
                  <col className="w-11" />
                  <col className="w-[70px]" />
                  <col className="w-[124px]" />
                  <col className="w-10" />
                  <col />
                  <col className="w-[138px]" />
                  <col className="w-[67px]" />
                </colgroup>
                <thead>
                  <tr>
                    <th className={clsx(th, 'pl-[10px]')}>Icon</th>
                    <th className={th}>
                      <span className="flex items-center justify-between">
                        Objektart
                        <svg width="7" height="5" viewBox="0 0 7 5"><path d="M0 5 L3.500 0 L7 5z" fill="#a0a0a0" /></svg>
                      </span>
                    </th>
                    <th className={th}>Adresstyp</th>
                    <th className={th}>Aktiv</th>
                    <th className={th}>Bezeichnung</th>
                    <th className={th}>Firmenname</th>
                    <th className={th}>Adressart</th>
                  </tr>
                </thead>
                <tbody>
                  {addresses.map(([typ, bez, firma, art], i) => (
                    <tr key={i} className={rowColor(i, 3)}>
                      <td className={clsx(td, 'pl-[7px]')}><Icon name="globe" /></td>
                      <td className={td}>Adresse</td>
                      <td className={td}>{typ}</td>
                      <td className={clsx(td, 'text-center')}><div className="flex justify-center"><Checkbox checked grid label={`${bez} aktiv`} /></div></td>
                      <td className={td}>{bez}</td>
                      <td className={td}>{firma}</td>
                      <td className={td}>{art}</td>
                    </tr>
                  ))}
                </tbody>
              </table>
            </div>
            <div className="flex w-[17px] shrink-0 flex-col border-r border-[#a0a0a0] bg-[#f0f0f0]">
              <button aria-label="Nach oben" className="flex h-[18px] items-center justify-center"><Chevron d="M1 6 L4.500 3 L8 6" /></button>
              <div className="h-[75px] bg-[#cdcdcd]" />
              <button aria-label="Nach unten" className="mt-auto flex h-[17px] items-center justify-center"><Chevron d="M1 3 L4.500 6 L8 3" /></button>
            </div>
          </div>
          <footer className="flex h-6 shrink-0 justify-end pt-px">
            <BlueButton>Schliessen</BlueButton>
          </footer>
        </div>
      </div>
    </section>
  );
}

/* ---------- step markers ---------- */

const frame = 'pointer-events-none absolute border-6 border-[#ff0000] shadow-[3px_3px_4px_rgba(0,0,0,0.45),inset_3px_3px_4px_rgba(0,0,0,0.4)]';
const badge = 'absolute flex h-[30px] w-[30px] items-center justify-center rounded-full bg-[#ff0000] text-[17px] leading-none text-white';

function StepMarkers() {
  return (
    <>
      <div className={clsx(frame, 'top-[160px] left-[498px] h-8 w-[210px]')} />
      <div className={clsx(frame, 'top-[661px] left-[792px] h-[30px] w-[163px]')} />
      <div className={clsx(frame, 'top-[456px] left-[949px] h-[560px] w-[779px]')} />
      <span className={clsx(badge, 'top-[160px] left-[722px]')}>1</span>
      <span className={clsx(badge, 'top-[672px] left-[1326px]')}>2</span>
      <span className={clsx(badge, 'top-[694px] left-[855px]')}>3</span>
    </>
  );
}

export default function App() {
  return (
    <div className="relative flex h-screen flex-col overflow-hidden bg-white pt-[5px] pr-[14px] pl-[6px] font-['Roboto_Condensed','Roboto',sans-serif] text-[12px] leading-[16px] text-[#111111]">
      <div className="z-10 flex min-h-0 flex-1 flex-col bg-white p-5 shadow-[0_0_4px_2px_rgba(0,0,0,0.13)]">
        <MainWindow />
      </div>
      <svg viewBox="0 0 1000 29" preserveAspectRatio="none" className="h-[29px] w-full shrink-0 overflow-visible blur-[2px]" aria-hidden="true">
        <defs>
          <linearGradient id="curl">
            <stop offset="0" stopColor="#cfcfcf" />
            <stop offset=".25" stopColor="#8c8c8c" />
            <stop offset=".5" stopColor="#7d7d7d" />
            <stop offset=".75" stopColor="#8c8c8c" />
            <stop offset="1" stopColor="#cfcfcf" />
          </linearGradient>
        </defs>
        <path d="M0 0 H1000 V20 H960 Q700 4 500 4 Q300 4 60 20 H0z" fill="url(#curl)" />
      </svg>
      <div className="absolute inset-0 z-20">
        <RelationDialog />
        <SelectionDialog />
        <StepMarkers />
      </div>
    </div>
  );
}
